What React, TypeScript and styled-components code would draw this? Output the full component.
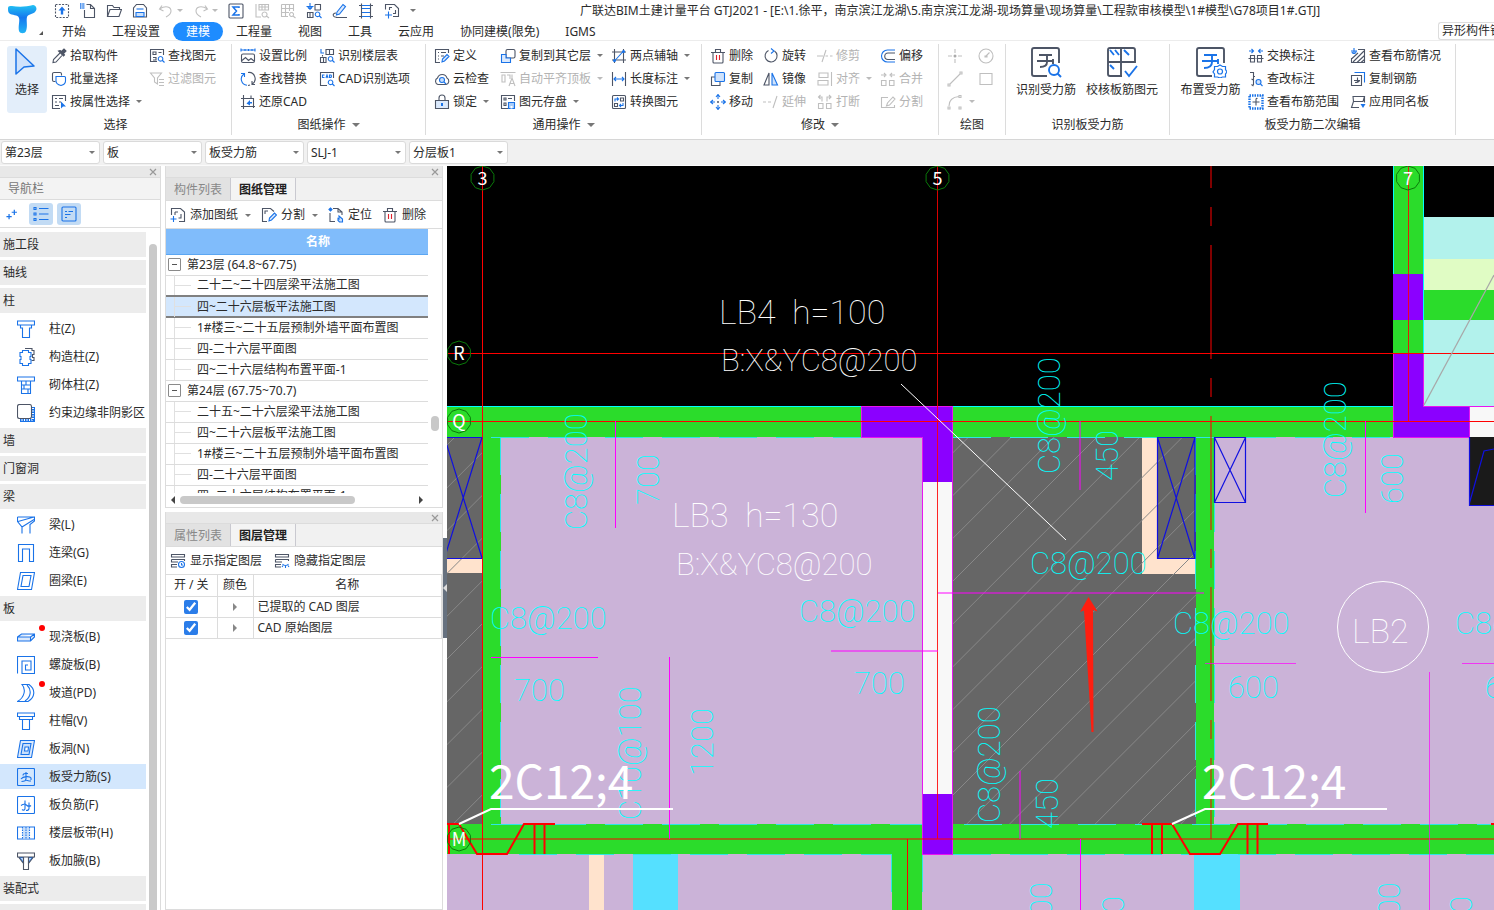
import React, { ReactNode } from "react";
import styled, { createGlobalStyle, css } from "styled-components";

const INK = "#4d5566";
const BLUE = "#1a73e8";
const MUTE = "#bfbfbf";
const LINE = "#dcdcdc";

const GlobalStyle = createGlobalStyle`
  * { box-sizing: border-box; }
  body {
    margin: 0;
    background: #fff;
    color: #2b2b2b;
    font: 12px/16px "Noto Sans", "Noto Sans CJK SC", sans-serif;
  }
  button, select, input { font: inherit; color: inherit; }
  button { border: 0; background: none; padding: 0; }
`;

/* ---------- icons ---------- */

const K = ({ d, f }: { d: string; f?: string }) => <path d={d} stroke={INK} fill={f || "none"} />;
const B = ({ d, f }: { d: string; f?: string }) => <path d={d} stroke={BLUE} fill={f || "none"} />;
const M = ({ d, f }: { d: string; f?: string }) => <path d={d} stroke={MUTE} fill={f || "none"} />;

const art: Record<string, ReactNode> = {
  upload: <><path d="M1.5 1.5h13v13h-13z" stroke={INK} strokeDasharray="2 1.3" /><path d="M8 3.500l3.500 4h-2.300v4h-2.400v-4H4.500z" fill={BLUE} /></>,
  newFile: <><K d="M6.500 1.500H10.500L14.500 5.500V14.500H4.500V7M10.500 1.500V5.500H14.500" /><path d="M0 1h5M0 3h5M0 5h5" stroke={BLUE} strokeDasharray="1.500 .8" strokeWidth="1.400" /></>,
  open: <K d="M1.500 13.500v-11h5l1.500 2h5.500v2M1.500 13.500l2.500-7h11.500l-2.500 7z" />,
  save: <><K d="M1.500 14V5l3-3.500h7l3 3.500v9z" /><B d="M4 13.500v-4h8v4z" f="#c9dffa" /><B d="M4.500 6h7" /></>,
  undo: <M d="M4 2.500L1.500 6 5.500 8M1.500 6C8 2 13 4 13 8c0 3-2 4.500-5 6" />,
  redo: <M d="M12 2.500L14.500 6l-4 2M14.500 6C8 2 3 4 3 8c0 3 2 4.500 5 6" />,
  sum: <><rect x="1" y="1" width="14" height="14" rx="1" stroke={INK} /><path d="M11 5V4H5l3.500 4L5 12h6v-1" stroke={BLUE} strokeWidth="1.500" /></>,
  ghostA: <M d="M2 1v13h5M5 1.500h9.500V7H5zM5 4h9M8 1v6M11 1v6M10.500 9a2.500 2.500 0 1 0 .1 0M12.500 13l2.500 2" />,
  ghostB: <M d="M1.500 1.500h12V8M1.500 1.500v12H8M1.500 5.500h12M1.500 9.500H9M5.500 1.500v12M9.500 1.500V8M11.500 9.500a2 2 0 1 0 .1 0M13 13l2.500 2" />,
  findAxis: <><B d="M4 0v7M.5 3.500h7M6 3.500a2 2 0 1 1-4 0M11.500 9a2.300 2.300 0 1 0 .1 0M13.500 13l2 2" /><K d="M9 1.500h5.500V7M9 1.500V7h5.500M1.500 9.500H7v5H1.500zM4 9v5" /></>,
  pen: <><B d="M5 9l6-7.500 2.500 2-6 7.500-3 1z" f="#dbe9fc" /><K d="M4 14.500h11M4 10C2 10 .5 11.500 1.500 13s3 1 4 1.500" /></>,
  ladder: <><B d="M4 2.500h8M4 5.500h8M4 9.500h8M4 13.500h8" /><K d="M3.500 .5v15M12.500 .5v15M1 2.500h2M13 2.500h2M1 13.500h2M13 13.500h2" /></>,
  paste: <><K d="M1.500 6.500V1.500H10.500L14.500 5.500V13.500H9M5.500 7V4.500H8M11.500 7v3.500H9" /><B d="M4.500 8.500v7M1 12h7" /></>,
  dropper: <><path d="M9 2.500l1.500 1L13 1l2 2-2.500 2.500 1 1.500-1 1-5-5z" fill={INK} stroke={INK} /><K d="M9 5L2.500 11.500 2 14.500l3-.5L11 7.500" /></>,
  batch: <><K d="M4.500 10.500H3A1.500 1.500 0 0 1 1.500 9V3A1.500 1.500 0 0 1 3 1.500h6A1.500 1.500 0 0 1 10.500 3v1.500" /><B d="M5 5.500h8.500a1 1 0 0 1 1 1V10c0 3-2.500 4-4.500 4.500C8 14 5 13 5 10z" /></>,
  byProp: <><K d="M9 14.500H1.500v-13h13V7M4 4.500h2M8 4.500h4M4 8h2M8 8h2M4 11.500h4" /><path d="M10 7.500v7l2-2h3z" fill={BLUE} /></>,
  findEl: <><K d="M8 13.500H1.500v-12h13V7M4 4h3v2.500H4zM9.500 4.500h3M4 9.500h3V12H4" /><B d="M11.500 8.500a2.300 2.300 0 1 0 .1 0M13.500 12.500l2 2" /></>,
  filter: <M d="M1.500 2h11L8.500 7v6l-3-2V7zM10 8.500h5M10 11.500h5M10 14.500h5" />,
  scale: <><B d="M1 2h14M1 .5v3M15 .5v3M5 1v2M8.500 1v2M12 1v2" /><rect x="1.500" y="6" width="13" height="8.500" rx="1.500" stroke={INK} /><K d="M2 12.500l3.500-3 3 3 2.500-2 3 2.500" /></>,
  replace: <><K d="M8 1.500a6.200 6.200 0 0 1 4 11.500M8 14.500a6 6 0 0 0 2-.5M12 10v3.500h3" /><B d="M7 14.300A6.200 6.200 0 0 1 4 3M1 2.500h3.500V6" /></>,
  restore: <><K d="M3.500 1v11.500H15M1 4.500h12.500V14M11 1.500v3M1 12.500h2.500V15" /><path d="M6.500 9.500l3.500-3.500v2h2v1.500h-2v2z" fill={BLUE} /></>,
  floorTbl: <><B d="M2 1v4h3M11.500 8.500a2.300 2.300 0 1 0 .1 0M13.500 12.500l2 2" /><K d="M7 1.500h7.500v5H7zM10.500 1.500v5M3.500 8.500V7M1.500 14.500v-5H7v5zM4.500 9.500v5" /></>,
  cadOpt: <><K d="M8 14.500H1.500v-13h13V7" /><B d="M5.500 4H3.500v2.500h2M7 7l1-3 1 3M10.500 4v2.500H12L12.500 5 12 4zM11.500 9a2.300 2.300 0 1 0 .1 0M13.500 13l2 2" /></>,
  define: <><K d="M6 14.500H1.500v-13h13V5M4 4.500h1M7 4.500h5M4 8h1M7 8h3M4 11h1" /><B d="M8 14l.5-3L13 6.500l2 2L10.500 13z" f="#dbe9fc" /></>,
  cloud: <><K d="M4 13.500a3.500 3.500 0 0 1-.5-6.500 5 5 0 0 1 9.500 0 3.500 3.500 0 0 1-1 6.500z" /><circle cx="8" cy="9" r="2.500" stroke={BLUE} fill="#c9dffa" /><B d="M10 11l2 2" /></>,
  lock: <><path d="M1.500 6.500h13v8h-13z" stroke={INK} fill="#dbe9fc" /><K d="M5 6V4a3 3 0 0 1 6 0v2" /><path d="M7 9h2v3H7z" fill={BLUE} /></>,
  copyFloor: <><rect x="6" y="1.500" width="9" height="8.500" rx="1.500" stroke={INK} /><B d="M6 6.500H1.500v8h9V10H6z" f="#dbe9fc" /></>,
  alignTop: <M d="M.5 1.500h15M2 4h3v7H2zM7 4h3v4M12 3.500v3M9 15l3-8 3 8M10 12.500h4" />,
  saveEl: <><K d="M8 14.500H1.500v-13h13V7M4 4h2v2H4zM8 4.500h4M4 9h2v2.500H4z" /><B d="M8.500 8.500h6v6h-6z" f="#a9ccf8" /><path d="M10.500 12h2v2.500h-2z" fill="#fff" /></>,
  axis2: <><K d="M3.500 1v14M12.500 1v14M1 4h14M1 12h14" /><B d="M3 13.500L13 2.500" /><circle cx="3.500" cy="12.500" r="1.500" fill={BLUE} /><circle cx="12.500" cy="3.500" r="1.500" fill={BLUE} /></>,
  lenDim: <><K d="M1.500 1v14M14.500 1v14" /><B d="M3 8h10M5 6L3 8l2 2M11 6l2 2-2 2" /></>,
  convert: <><rect x="1.500" y="1.500" width="13" height="13" rx="1" stroke={INK} /><K d="M9.500 4h3v3h-3zM3.500 9.500h3v3h-3z" /><B d="M4 7.500V5h3M6 3.500L7.500 5 6 6.500M12 9v2.500H9M10 10l-1.500 1.500L10 13" /></>,
  trash: <><K d="M1 4.500h14M3 4.500v9.500a1 1 0 0 0 1 1h8a1 1 0 0 0 1-1V4.500M5.500 4V1.500h5V4" /><path d="M6.500 7v5M9.500 7v5" stroke="#e0232e" /></>,
  copy: <><K d="M5 6H1.500v8.500H10V11" /><rect x="5" y="1.500" width="9.500" height="9" rx="1" stroke={BLUE} fill="#cfe2fb" /></>,
  move: <><B d="M8 1v4M8 11v4M1 8h4M11 8h4M6 3l2-2.500L10 3M6 13l2 2.500 2-2.500M3 6L.5 8 3 10M13 6l2.500 2-2.500 2" /><circle cx="8" cy="8" r="1" fill={INK} /></>,
  rotate: <><K d="M5.500 2.500a6 6 0 1 0 6 .5" /><B d="M8 .5L11 3 8 5.500" /></>,
  mirror: <><K d="M6 2L1 14h5z" /><B d="M9 2l5.500 12H9z" f="#cfe2fb" /></>,
  extend: <M d="M0 8h3M5 8h3M14 2l-4 12" />,
  trim: <M d="M0 8h6M8.500 8H11M13 8h2.500M9 2L5 14" />,
  align: <M d="M2 2h9v4.500H2zM1 9.500h10V14H1zM14.500 1v14" />,
  brk: <M d="M1.500 9.500h4.500v5H1.500zM9.500 9.500H14v5H9.500zM5 7.500V3H2M3.500 1L1.500 3l2 2M10 7.500V3h3.500M12 1l2 2-2 2" />,
  offset: <><K d="M15 5H8a3 3 0 0 0 0 6.500h7" /><B d="M15 2H7.500a6 6 0 0 0 0 12H15" /></>,
  merge: <M d="M1.500 9.500h4.500v5H1.500zM9.500 9.500H14v5H9.500zM1 4h4M4 2l2 2-2 2M15 4h-4M12 2l-2 2 2 2" />,
  split: <M d="M8 3.500H1.500v10h13V11M6.500 12l1-3L13 3l2 2-5.500 6z" />,
  point: <><M d="M8 1v4M8 11v4M1 8h4M11 8h4" /><circle cx="8" cy="8" r="1.500" fill="#aaa" /></>,
  line: <M d="M3 13L13 3M1 13h2v2H1zM13 1h2v2h-2z" />,
  arc: <M d="M2 12C2 6 6 3 12 2.500M1 13h2v2H1zM12 1.500h2v2h-2zM12 13h2v2h-2z" />,
  circle: <><circle cx="8" cy="8" r="7" stroke={MUTE} /><M d="M8 8l3.500-3.500M7 8h2v1H7z" /></>,
  rect: <M d="M2 2.500h12v11H2z" />,
  swap: <><B d="M1 3h4M3.500 1l2 2-2 2M15 3h-4M12.500 1l-2 2 2 2" /><K d="M2.500 7.500h4v6.500h-4zM9.500 7.500h4v6.500h-4zM.5 10.500h7M8.500 10.500h7" /></>,
  edit: <><K d="M2 1.500h3.500v4h1.500M5.500 5.500V9L3.500 8M5.500 9v5M3.500 13.500l2 1.500" /><circle cx="10.500" cy="11" r="2.500" stroke={BLUE} fill="#cfe2fb" /><B d="M12.500 13l2 2" /></>,
  range: <><path d="M1.500 1.500h13v13h-13z" stroke={BLUE} strokeWidth="2.400" strokeDasharray="1.500 1" /><K d="M9.500 4.500C8 4 8 5 8 6v5.500M4.500 8h7" /></>,
  status: <><K d="M8 1.500h6.500v13h-13V10M3 14l11-11M7 14.500l7.500-7M2 10.500L8 5M11 14.500l3.500-3" /><B d="M4 0v6M1 3h6M6 3a2 2 0 1 1-4 1" /></>,
  copyBar: <><K d="M1.500 4.500h10v10h-10zM4 9.500h6M7.500 6.500v5.500M5 11.500c2 0 4-.5 4.500-2" /><B d="M4.500 1.500h10v10" /></>,
  apply: <><K d="M3 2.500h11.500l-1.500 5H3.500zM9 13.500H1.500l2-6M14.500 2.500v6" /><path d="M10.500 10h5L13 14z" fill={BLUE} /></>,
  addDwg: <><K d="M1.500 8V1.500h9L14.500 5v9.500H9M5 5v3M5 5h3M11 7v4H8.500" /><B d="M3.500 9v6M.5 12h6" /></>,
  cutDwg: <><K d="M6 14.500H1.500v-13h8L13 4.500M4 7V4h3" /><B d="M8 14l.5-3L13.500 6l2 2-5 5z" f="#dbe9fc" /></>,
  locate: <><K d="M5 1.500h5l4 3.500v3M2 6v8.500h5M10 1.500V5h4" /><B d="M1 2.500l1.500-1.500L4 2.500 2.500 4z" f={BLUE} /><B d="M11 9v3l-1-.5v2l1.500 1.500h3V12z" f="#cfe2fb" /></>,
  layerOn: <><K d="M1.500 1.500h13v2.500h-13zM1.500 6.500h13V8M1.500 6.500V9H8M7 11.500H1.500V14H7" /><circle cx="11.500" cy="11.500" r="3" stroke={BLUE} fill="#fff" /><B d="M11.500 10v2h1.500" /></>,
  layerOff: <><K d="M1.500 1.500h13v2.500h-13zM1.500 6.500h13V8M1.500 6.500V9H8M7 11.500H1.500V14H7" /><B d="M8.500 11c1.500 2 4.500 2 6 0M9 12.500l-1 1.500M11.500 13v2M14 12.500l1 1.500" /></>,
  plus2: <path d="M3.500 8v6M.5 11h6M9.500 3v6M6.500 6h6" stroke={BLUE} strokeWidth="1.400" />,
  list: <><B d="M6 2.500h9.500M6 8h9.500M6 13.500h9.500" /><B d="M1 1.500h2v2H1zM1 7h2v2H1zM1 12.500h2v2H1z" /></>,
  card: <><rect x="1" y="1" width="14" height="14" rx="1" stroke={BLUE} /><B d="M4 5.500h2M7.500 5.500H12M4 8.500h5.500M4 11.500h2" /></>,
};

const big: Record<string, ReactNode> = {
  cursor: <path d="M5 3l18 17-10 1-8 7z" stroke={BLUE} strokeWidth="1.500" fill="#cfe2fb" strokeLinejoin="round" />,
  findBar: <><K d="M17 30H4a2 2 0 0 1-2-2V4a2 2 0 0 1 2-2h23a2 2 0 0 1 2 2v13" /><K d="M9 9h13M7 15h16V13M10 21c5 0 7-2 7-5V8M23 14v4" /><circle cx="24" cy="24" r="5" stroke={BLUE} fill="#fff" /><B d="M27.500 27.500L31 31" /></>,
  checkBar: <><K d="M16 30H4a2 2 0 0 1-2-2V4a2 2 0 0 1 2-2h23a2 2 0 0 1 2 2v13M15 2v28M2 16h27" /><B d="M4 4l4 5M9 4l4 5M18 4l5 5M4 19l4 4M19 25l4 5 8-10" /></>,
  setBar: <><K d="M17 30H4a2 2 0 0 1-2-2V4a2 2 0 0 1 2-2h23a2 2 0 0 1 2 2v13" /><B d="M9 9h13M7 15h16V13M9 22c6 0 8-2 8-6V8M23 14v4" /><path d="M25 19l2.500 1.500h3v3L32 26l-1.500 2v3h-3L25 32l-2.500-1h-3v-3L18 26l1.500-2.500v-3h3z" stroke={BLUE} strokeWidth="1.200" fill="#fff" /><circle cx="25" cy="25.500" r="2.500" stroke={BLUE} strokeWidth="1.200" /></>,
};

const navArt: Record<string, ReactNode> = {
  column: <B d="M.5 1h17v4H.5zM3.500 5v3H5.500V17.500h7V8h2V5" />,
  build: <><K d="M8 .5h7v2h2v4h-1.500v3H17v3h-2.500" /><B d="M5.500 2.500h6v2h2.500v4h-1v3h1v4h-2.500v2h-6v-2H3v-4h1v-3H3v-4h2.500z" f="#fff" /></>,
  brick: <B d="M.5 1h17v4H.5zM4.500 5V17.500h9V5M4.500 9h9M4.500 13h9M9 5V9M7 9v4M11 13v4" />,
  shade: <><B d="M3 17.500h14.500V3" /><path d="M3 16h13V3" stroke={BLUE} strokeWidth="2" strokeDasharray="1.500 1" /><rect x=".5" y=".5" width="14" height="14" rx="2" stroke={INK} fill="#fff" /></>,
  beam: <B d="M.5 1h17v4L13 8.500V17.500M5 17.500V11L.5 5.500V1M1 5.500L17 1M5 11L17 3.500" />,
  link: <B d="M1.500 17.500V.5h15v17h-4V5h-7v12.500z" />,
  ring: <B d="M3.500 .5h14l-3 17H.5zM6 3.500h8l-2 11H4z" />,
  slab: <B d="M.5 9l4-3h13v3l-4 4H.5zM.5 9h13l4-3M13.500 9v4" f="#dbe9fc" />,
  spiral: <B d="M.5 17.500V.5h17v17H5V5h9v9H8.500V9H11" />,
  ramp: <B d="M5 .5h7c7 5 6 13-1 17H.5C8 13 9 5 5 .5zM10 1c5 5 4 12-2 16" />,
  cap: <B d="M.5 1h17v3.500H.5zM2.500 4.500v3h13v-3M5.500 7.500V17.500h7V7.500" />,
  hole: <><B d="M3.500 .5h14l-3 17H.5z" f="#dbe9fc" /><B d="M6 3.500h8l-2 11H4z" f="#c9dffa" /><B d="M8 7h3.500l-.5 4H7.500z" f="#fff" /></>,
  bars: <><rect x=".5" y=".5" width="17" height="17" rx="1" stroke={BLUE} /><B d="M6 7.500c0-2 1-2 5-2M4 11c2-3 9-3 10-1v2M9 4v7c0 2-2 2.500-4.500 2.500M8 12c2 0 3 1 6 1" /></>,
  negbars: <><rect x=".5" y=".5" width="17" height="17" rx="1" stroke={BLUE} /><B d="M8 4.500v8c0 2-2 2-3 1M4 9.500c3-2 5-1 6 0s3 1 4 0M12 6.500v6c0 2-1 2-3 2" /></>,
  strip: <><B d="M.5 3h17v12H.5z" /><path d="M6 3.500h6v11H6z" fill="#c9dffa" /><path d="M5.500 3v12M9 3v12M12.500 3v12" stroke={BLUE} strokeDasharray="1.500 1" /></>,
  haunch: <><B d="M2.500 5.500l4 5V5.500zM15.500 5.500l-4 5V5.500z" f="#c9dffa" /><K d="M.5 1h17v4H.5zM1.500 5l5 6.500M16.500 5l-5 6.500M6.500 5v12.500h5V5" /></>,
};

const Icon = ({ name, size = 16 }: { name: string; size?: number }) => (
  <svg width={size} height={size} viewBox="0 0 16 16" fill="none" strokeWidth="1.1" aria-hidden="true">{art[name]}</svg>
);
const Caret = styled.i<{ $muted?: boolean; $wide?: boolean }>`
  border: ${(p) => (p.$wide ? 4 : 3)}px solid transparent;
  border-top-color: ${(p) => (p.$muted ? "#bbb" : "#777")};
  border-bottom: 0;
  flex: none;
`;

/* ---------- shell ---------- */

const Shell = styled.div`
  display: flex;
  flex-direction: column;
  height: 100vh;
  overflow: hidden;
  svg { flex: none; }
`;
const Header = styled.header`
  display: flex;
  height: 41px;
  border-bottom: 1px solid #ececec;
`;
const Brand = styled.button`
  width: 49px;
  display: flex;
  align-items: flex-end;
  padding: 0 0 5px 7px;
  gap: 1px;
`;
const Corner = styled.i`
  border: 2px solid transparent;
  border-right-color: #555;
  border-bottom-color: #555;
`;
const HeadMain = styled.div`
  flex: 1;
  min-width: 0;
`;
const TitleRow = styled.div`
  display: flex;
  align-items: center;
  height: 21px;
`;
const Quick = styled.div`
  display: flex;
  align-items: center;
  gap: 10px;
  width: 531px;
  padding-left: 5px;
`;
const QuickBtn = styled.button`
  display: flex;
  align-items: center;
  gap: 3px;
`;
const Title = styled.h1`
  margin: 0;
  font-size: 12px;
  font-weight: 400;
  white-space: nowrap;
`;
const TabRow = styled.nav`
  display: flex;
  align-items: flex-end;
  height: 20px;
`;
const Tab = styled.button<{ $on?: boolean }>`
  height: 19px;
  padding: 1px 13px 0;
  border-radius: 10px;
  white-space: nowrap;
  ${(p) => p.$on && css`background: #1e8cff; color: #fff;`}
`;
const Hint = styled.button`
  margin: 0 0 1px auto;
  width: 56px;
  height: 18px;
  padding-left: 3px;
  overflow: hidden;
  white-space: nowrap;
  text-align: left;
  border: 1px solid #ddd;
  border-right: 0;
  border-radius: 3px 0 0 3px;
`;

/* ---------- ribbon ---------- */

const Ribbon = styled.div`
  display: flex;
  height: 99px;
  border-bottom: 1px solid #d6d6d6;
  overflow: hidden;
`;
const Group = styled.section<{ $w: number; $pad: number }>`
  flex: none;
  display: flex;
  flex-direction: column;
  width: ${(p) => p.$w}px;
  margin: 3px 0 4px;
  border-right: 1px solid ${LINE};
  > div { padding-left: ${(p) => p.$pad}px; }
`;
const Cols = styled.div<{ $cols: string }>`
  display: grid;
  grid-template-columns: ${(p) => p.$cols};
  height: 72px;
`;
const Col = styled.div`
  display: flex;
  flex-direction: column;
`;
const Tool = styled.button<{ $off?: boolean }>`
  display: flex;
  align-items: center;
  gap: 3px;
  height: 23px;
  flex: none;
  white-space: nowrap;
  color: ${(p) => (p.$off ? "#b3b3b3" : "inherit")};
  i { margin-left: 3px; }
`;
const BigTool = styled.button<{ $on?: boolean }>`
  display: flex;
  flex-direction: column;
  align-items: center;
  gap: 4px;
  height: 67px;
  margin: 2px 4px 0 0;
  border-radius: 3px;
  white-space: nowrap;
  ${(p) => p.$on && css`background: #e3eefa;`}
`;
const GroupName = styled.h2`
  display: flex;
  align-items: center;
  justify-content: center;
  gap: 6px;
  height: 20px;
  margin: 0;
  font-size: 12px;
  font-weight: 400;
`;

type T = [string, string, ("off" | "menu" | "offmenu")?];
const Tools = ({ items }: { items: T[] }) => (
  <Col>
    {items.map(([icon, label, m]) => {
      const off = m === "off" || m === "offmenu";
      return (
        <Tool key={icon} $off={off} disabled={off} aria-label={label || icon}>
          <Icon name={icon} />
          {label}
          {(m === "menu" || m === "offmenu") && <Caret $muted={off} />}
        </Tool>
      );
    })}
  </Col>
);
const Big = ({ icon, label, on }: { icon: string; label: string; on?: boolean }) => (
  <BigTool $on={on}>
    <svg width="32" height="32" viewBox="0 0 32 32" fill="none" strokeWidth="1.9">{big[icon]}</svg>
    {label}
  </BigTool>
);

const ribbon: { name: string; w: number; pad: number; cols: string; menu?: boolean; body: ReactNode }[] = [
  {
    name: "选择", w: 232, pad: 7, cols: "44px 98px auto",
    body: <><Big icon="cursor" label="选择" on />
      <Tools items={[["dropper", "拾取构件"], ["batch", "批量选择"], ["byProp", "按属性选择", "menu"]]} />
      <Tools items={[["findEl", "查找图元"], ["filter", "过滤图元", "off"]]} /></>,
  },
  {
    name: "图纸操作", w: 194, pad: 8, cols: "79px auto", menu: true,
    body: <><Tools items={[["scale", "设置比例"], ["replace", "查找替换"], ["restore", "还原CAD"]]} />
      <Tools items={[["floorTbl", "识别楼层表"], ["cadOpt", "CAD识别选项"]]} /></>,
  },
  {
    name: "通用操作", w: 276, pad: 8, cols: "66px 111px auto", menu: true,
    body: <><Tools items={[["define", "定义"], ["cloud", "云检查"], ["lock", "锁定", "menu"]]} />
      <Tools items={[["copyFloor", "复制到其它层", "menu"], ["alignTop", "自动平齐顶板", "offmenu"], ["saveEl", "图元存盘", "menu"]]} />
      <Tools items={[["axis2", "两点辅轴", "menu"], ["lenDim", "长度标注", "menu"], ["convert", "转换图元"]]} /></>,
  },
  {
    name: "修改", w: 237, pad: 8, cols: "53px 54px 63px auto", menu: true,
    body: <><Tools items={[["trash", "删除"], ["copy", "复制"], ["move", "移动"]]} />
      <Tools items={[["rotate", "旋转"], ["mirror", "镜像"], ["extend", "延伸", "off"]]} />
      <Tools items={[["trim", "修剪", "off"], ["align", "对齐", "offmenu"], ["brk", "打断", "off"]]} />
      <Tools items={[["offset", "偏移"], ["merge", "合并", "off"], ["split", "分割", "off"]]} /></>,
  },
  {
    name: "绘图", w: 67, pad: 8, cols: "31px auto",
    body: <><Tools items={[["point", "", "off"], ["line", "", "off"], ["arc", "", "offmenu"]]} />
      <Tools items={[["circle", "", "off"], ["rect", "", "off"]]} /></>,
  },
  {
    name: "识别板受力筋", w: 164, pad: 7, cols: "70px 82px",
    body: <><Big icon="findBar" label="识别受力筋" /><Big icon="checkBar" label="校核板筋图元" /></>,
  },
  {
    name: "板受力筋二次编辑", w: 286, pad: 7, cols: "71px 102px auto",
    body: <><Big icon="setBar" label="布置受力筋" />
      <Tools items={[["swap", "交换标注"], ["edit", "查改标注"], ["range", "查看布筋范围"]]} />
      <Tools items={[["status", "查看布筋情况"], ["copyBar", "复制钢筋"], ["apply", "应用同名板"]]} /></>,
  },
];

const Filters = styled.div`
  display: flex;
  align-items: center;
  gap: 3px;
  height: 26px;
  padding-left: 1px;
  background: #f1f1f1;
  border-bottom: 1px solid #fafafa;
`;
const Pick = styled.label`
  display: flex;
  align-items: center;
  width: 99px;
  height: 23px;
  padding-right: 4px;
  background: #fff;
  border: 1px solid #dadada;
  border-radius: 3px;
  select {
    flex: 1;
    min-width: 0;
    appearance: none;
    border: 0;
    background: none;
    padding: 0 3px;
    outline: 0;
  }
`;

/* ---------- side panels ---------- */

const Body = styled.div`
  display: flex;
  flex: 1;
  min-height: 0;
`;
const Strip = styled.div`
  display: flex;
  align-items: center;
  justify-content: flex-end;
  height: 12px;
  flex: none;
  padding-right: 3px;
  background: #e8e8e8;
  border-bottom: 1px solid ${LINE};
`;
const CloseBtn = () => (
  <button aria-label="关闭">
    <svg width="8" height="8" viewBox="0 0 8 8" stroke="#999" strokeWidth="1.2" display="block"><path d="M1 1l6 6M7 1L1 7" /></svg>
  </button>
);
const Nav = styled.aside`
  display: flex;
  flex-direction: column;
  width: 161px;
  flex: none;
  border-right: 1px solid ${LINE};
`;
const NavTitle = styled.h2`
  height: 22px;
  flex: none;
  margin: 0;
  padding: 3px 8px;
  background: #f3f3f3;
  border-bottom: 1px solid ${LINE};
  color: #777;
  font-size: 12px;
  font-weight: 400;
`;
const NavTools = styled.div`
  display: flex;
  align-items: center;
  gap: 4px;
  height: 28px;
  flex: none;
  padding-left: 1px;
  border-bottom: 1px solid ${LINE};
`;
const ModeBtn = styled.button<{ $on?: boolean }>`
  display: grid;
  place-items: center;
  width: 24px;
  height: 22px;
  border-radius: 3px;
  background: ${(p) => (p.$on ? "#c2dbf4" : "none")};
`;
const NavBody = styled.div`
  display: flex;
  flex: 1;
  min-height: 0;
  overflow: hidden;
`;
const NavList = styled.div`
  display: flex;
  flex-direction: column;
  gap: 3px;
  width: 146px;
  padding-top: 4px;
`;
const NavHead = styled.button`
  flex: none;
  height: 25px;
  padding: 0 3px;
  text-align: left;
  background: #ececec;
`;
const NavItem = styled.button<{ $on?: boolean }>`
  position: relative;
  flex: none;
  display: flex;
  align-items: center;
  gap: 14px;
  height: 25px;
  padding-left: 17px;
  white-space: nowrap;
  background: ${(p) => (p.$on ? "#d3e7fd" : "none")};
`;
const Dot = styled.i`
  position: absolute;
  left: 39px;
  top: 1px;
  width: 6px;
  height: 6px;
  border-radius: 3px;
  background: #f00;
`;
const NavThumb = styled.div`
  width: 8px;
  margin: 16px 0 0 3px;
  border-radius: 4px 4px 0 0;
  background: #c9c9c9;
`;

const nav: [string, string?, ("dot" | "on")?][] = [
  ["施工段"], ["轴线"], ["柱"],
  ["柱(Z)", "column"], ["构造柱(Z)", "build"], ["砌体柱(Z)", "brick"], ["约束边缘非阴影区", "shade"],
  ["墙"], ["门窗洞"], ["梁"],
  ["梁(L)", "beam"], ["连梁(G)", "link"], ["圈梁(E)", "ring"],
  ["板"],
  ["现浇板(B)", "slab", "dot"], ["螺旋板(B)", "spiral"], ["坡道(PD)", "ramp", "dot"], ["柱帽(V)", "cap"],
  ["板洞(N)", "hole"], ["板受力筋(S)", "bars", "on"], ["板负筋(F)", "negbars"], ["楼层板带(H)", "strip"], ["板加腋(B)", "haunch"],
  ["装配式"], [""],
];

const Middle = styled.div`
  display: flex;
  flex-direction: column;
  gap: 4px;
  width: 278px;
  flex: none;
  margin-left: 4px;
`;
const Panel = styled.section<{ $h?: number }>`
  display: flex;
  flex-direction: column;
  ${(p) => (p.$h ? css`height: ${p.$h}px; flex: none;` : css`flex: 1;`)}
  border: 1px solid ${LINE};
  border-top: 0;
  min-height: 0;
`;
const PanelTabs = styled.div`
  display: flex;
  height: 23px;
  flex: none;
  background: #f1f1f1;
  border-bottom: 1px solid ${LINE};
`;
const PanelTab = styled.button<{ $on?: boolean }>`
  width: 65px;
  padding-top: 1px;
  border-right: 1px solid #c9c9d0;
  background: ${(p) => (p.$on ? "#f4f4f4" : "#e2e2e2")};
  color: ${(p) => (p.$on ? "#222" : "#888")};
  font-weight: ${(p) => (p.$on ? 700 : 400)};
`;
const PanelTools = styled.div<{ $gap: number }>`
  display: flex;
  align-items: center;
  gap: ${(p) => p.$gap}px;
  height: 28px;
  flex: none;
  padding: 1px 0 0 4px;
  border-bottom: 1px solid ${LINE};
`;
const PanelTool = styled(Tool)`
  gap: 4px;
`;
const TreeWrap = styled.div`
  display: flex;
  flex: 1;
  min-height: 0;
`;
const TreeView = styled.div`
  width: 262px;
  overflow: hidden;
`;
const Tree = styled.table`
  width: 100%;
  border-collapse: collapse;
  th {
    height: 25px;
    padding: 1px 0 0 42px;
    background: #80bcfb;
    border-bottom: 1px solid #5ba6f2;
    color: #fff;
  }
  td { padding: 0; }
`;
const TreeRow = styled.tr<{ $on?: boolean }>`
  height: 21px;
  td { border-bottom: 1px solid ${LINE}; }
  ${(p) => p.$on && css`
    background: #d3e7fd;
    td { border-top: 2px solid #808080; border-bottom: 2px solid #808080; }
  `}
`;
const TreeCell = styled.div`
  display: flex;
  align-items: center;
  height: 19px;
  white-space: nowrap;
`;
const Fold = styled.button`
  width: 13px;
  height: 13px;
  margin: 0 6px 0 2px;
  border: 1px solid #8a8a8a;
  border-radius: 1px;
  background: linear-gradient(#555, #555) center / 5px 1px no-repeat;
`;
const Branch = styled.i`
  width: 17px;
  height: 20px;
  margin: 0 6px 0 8px;
  border-left: 1px solid #e0e0e0;
  background: linear-gradient(#e0e0e0, #e0e0e0) center / 100% 1px no-repeat;
`;
const VThumb = styled.div`
  width: 8px;
  height: 15px;
  margin: 187px 0 0 3px;
  border-radius: 4px;
  background: #c8c8c8;
`;
const HScroll = styled.div`
  display: flex;
  align-items: center;
  gap: 5px;
  height: 14px;
  flex: none;
  padding-left: 5px;
`;
const HThumb = styled.div`
  width: 175px;
  height: 8px;
  margin-right: 59px;
  border-radius: 4px;
  background: #c9c9c9;
`;
const Side = styled.i<{ $right?: boolean; $tone?: string }>`
  display: inline-block;
  border: 4px solid transparent;
  ${(p) => (p.$right ? "border-right: 0; border-left-color" : "border-left: 0; border-right-color")}: ${(p) => p.$tone || "#444"};
`;
const Layers = styled.table`
  border-collapse: collapse;
  width: 100%;
  table-layout: fixed;
  th, td {
    height: 21px;
    padding: 0;
    border: 1px solid ${LINE};
    text-align: center;
    font-weight: 400;
    line-height: 16px;
  }
  th:first-child, td:first-child { border-left: 0; width: 51px; }
  th:nth-child(2) { width: 36px; }
  tr:first-child th { border-top: 0; }
  td:last-child { text-align: left; padding-left: 4px; }
  input { display: block; width: 14px; height: 14px; margin: 0 auto; accent-color: #2b7de9; }
`;
const Splitter = styled.div`
  display: flex;
  width: 4px;
  flex: none;
  padding-top: 372px;
  button {
    width: 4px;
    height: 100px;
    background: #66717f;
    display: grid;
    place-items: center;
  }
`;

const floors: [string, string[]][] = [
  ["第23层 (64.8~67.75)", ["二十二~二十四层梁平法施工图", "四~二十六层板平法施工图", "1#楼三~二十五层预制外墙平面布置图", "四-二十六层平面图", "四~二十六层结构布置平面-1"]],
  ["第24层 (67.75~70.7)", ["二十五~二十六层梁平法施工图", "四~二十六层板平法施工图", "1#楼三~二十五层预制外墙平面布置图", "四-二十六层平面图", "四~二十六层结构布置平面-1"]],
];

/* ---------- drawing ---------- */

const Stage = styled.main`
  flex: 1;
  min-width: 0;
  background: #000;
  overflow: hidden;
  svg { display: block; width: 100%; height: 100%; }
`;
const Note = styled.text<{ $white?: boolean; $large?: boolean }>`
  font-family: "Roboto", sans-serif;
  font-weight: 100;
  font-size: ${(p) => (p.$large ? 34 : 31)}px;
  fill: ${(p) => (p.$white ? "#fff" : "#00ffff")};
  white-space: pre;
`;
const Mark = styled.text`
  font: 18px "Noto Sans CJK SC", sans-serif;
  fill: #fff;
  text-anchor: middle;
`;
const Callout = styled.text`
  font: 46px "Noto Sans CJK SC", sans-serif;
  fill: #fff;
`;

const GREEN = "#2bdc2b", PURPLE = "#8b00ff", LILAC = "#cbb3d8", SLAB = "#666", PEACH = "#ffe3cd", SKY = "#55e0ff", AQUA = "#b2f2ec";

const blocks: [number, number, number, number, string][] = [
  [447, 437, 36, 387, SLAB], [447, 559, 36, 14, PEACH],
  [500, 437, 423, 387, LILAC], [953, 437, 243, 387, SLAB],
  [1142, 437, 53, 137, PEACH], [1157, 437, 38, 122, SLAB],
  [1214, 437, 1200, 387, LILAC], [447, 854, 2000, 600, LILAC],
  [447, 406, 946, 31, GREEN], [483, 437, 18, 387, GREEN], [1196, 437, 18, 387, GREEN],
  [589, 854, 15, 600, PEACH], [633, 854, 45, 600, SKY], [1194, 854, 46, 600, SKY],
  [447, 824, 2000, 30, GREEN], [892, 854, 30, 600, GREEN],
  [861, 406, 92, 31, PURPLE], [922, 437, 31, 45, PURPLE], [922, 482, 31, 312, "#f8f8f8"], [922, 794, 31, 60, PURPLE],
  [1393, 166, 30, 240, GREEN], [1393, 274, 30, 46, PURPLE], [1393, 353, 30, 84, PURPLE], [1423, 406, 46, 31, PURPLE],
  [1424, 217, 1000, 42, AQUA], [1424, 259, 1000, 31, "#e0fcc4"], [1424, 290, 1000, 30, GREEN], [1424, 320, 1000, 86, AQUA],
  [1469, 406, 1000, 31, "#f8f8f8"], [1469, 437, 1000, 68, "#1a1a1a"],
];
const bubbles: [number, number, string][] = [[482.5, 178, "3"], [937.5, 178, "5"], [1408, 178, "7"], [459, 353, "R"], [459, 421, "Q"], [459, 839, "M"]];
const flat: [number, number, string, boolean?, boolean?][] = [
  [719, 324, "LB4  h=100", true, true], [721, 371, "B:X&YC8@200", true],
  [672, 527, "LB3  h=130", true, true], [676, 575, "B:X&YC8@200", true],
  [1352, 643, "LB2", true, true],
  [490, 629, "C8@200"], [799, 622, "C8@200"], [1030, 574, "C8@200"], [1173, 634, "C8@200"], [1455, 634, "C8@200"],
  [514, 701, "700"], [854, 694, "700"], [1228, 698, "600"], [1485, 698, "600"],
];
const upright: [number, number, string][] = [
  [587, 530, "C8@200"], [659, 505, "700"], [1060, 474, "C8@200"], [1118, 481, "450"], [1346, 498, "C8@200"], [1403, 504, "600"],
  [641, 820, "C10@100"], [713, 776, "1200"], [1000, 823, "C8@200"], [1058, 829, "450"],
  [1052, 999, "C8@200"], [1124, 947, "450"], [1400, 999, "C8@200"], [1472, 947, "600"],
];
const octagon = (x: number, y: number) =>
  Array.from({ length: 10 }, (_, i) => {
    const a = (i * Math.PI) / 5 + Math.PI / 2;
    return `${(x + 12 * Math.cos(a)).toFixed(1)},${(y + 12 * Math.sin(a)).toFixed(1)}`;
  }).join(" ");
const hatch = Array.from({ length: 30 }, (_, i) => {
  const c = 892 + i * 42.8;
  return `M${c - 437} 437L${c - 824} 824`;
}).join("");

const Drawing = () => (
  <Stage>
    <svg role="img" aria-label="板受力筋平面图">
      <defs>
        <clipPath id="slabs"><path d="M447 437h36v387h-36zM953 437h243v387H953z" /></clipPath>
      </defs>
      <g transform="translate(-447 -166)" fill="none">
        <g shapeRendering="crispEdges">
          {blocks.map(([x, y, w, h, c], i) => <rect key={i} x={x} y={y} width={w} height={h} fill={c} />)}
        </g>
        <path d={hatch} stroke="#888" clipPath="url(#slabs)" />
        <g shapeRendering="crispEdges">
          <path d="M447 406.500H861M953 406.500H1393M1393.500 166V274M1423.500 166V353" stroke="#0ff" />
          <path d="M491 437.500H861M953 437.500H1393M491 824.500H922M964 824.500H2400" stroke="#2ee6e6" strokeDasharray="38 19" />
          <path d="M519 854.500H892M953 854.500H2400M500.500 437V824M1214.500 437V824M1195.500 437V824M891.500 854V1400M922.500 854V1400" stroke="#2ee6e6" strokeDasharray="38 19" />
          <path d="M482.500 437V824" stroke="#d8f5ee" strokeDasharray="38 19" />
          <path d="M861.500 406V437.500H922.500V854H952.500V406H861.500M1393.500 353H1423.500V406H1469V437H1393.500zM1469 406.500H2400" stroke="#e815f0" />
          <path d="M482.500 166V910M447 353.500H2400M447 421.500H2400M907.500 839V1400" stroke="#f00" />
          <path d="M937.500 166V839M1408.500 166V421" stroke="#f00" strokeOpacity=".85" />
          <path d="M447 839H2400" stroke="#f00" strokeOpacity=".5" strokeWidth="2" />
          <path d="M1211 166V188M1211 207V226M1211 245V359M1211 378V397M1211 416V530M1211 549V568M1211 587V701M1211 720V739M1211 758V839" stroke="#f00" strokeOpacity=".5" strokeWidth="2" />
          <path d="M615.500 421V528M491 657.500H598M669.500 657V839M1080.500 839V1400M1365.500 421V513" stroke="#f0f" />
          <path d="M831 651H938M938 593H1204M1080 421V490M1020 771V839" stroke="#f0f" strokeOpacity=".5" strokeWidth="2" />
          <path d="M1205 663.500H1296M1462 663.500H2400M1429 672V1400" stroke="#f0f" strokeOpacity=".7" />
        </g>
        <path d="M444.500 437.500H482M447 558.500H482M444.500 437.500L482 558M482 437.500L444.500 558M1157.500 437.500H1195V558.500H1157.500zL1195 558.500M1195 437.500L1157.500 558.500M1214.500 437.500H1245.500V502.500H1214.500zL1245.500 502.500M1245.500 437.500L1214.500 502.500M1469.500 437V505.500H1600M1469.500 503L1484 451L1494 449" stroke="#1010e0" strokeWidth="1.200" />
        <path d="M1424 405L1494 275" stroke="#a8a8a8" strokeWidth="1.300" />
        <path d="M447 824H459L477 854H507L524 824H555M449 824V854M534.500 824V854M544.500 824V854M1142 824H1172L1190 854H1220L1238 824H1268M1152 824V854M1162 824V854M1247.500 824V854M1257.500 824V854M1491 824H1520" stroke="#f00" strokeWidth="2" />
        <path d="M901 384L1066 540" stroke="#fff" />
        <circle cx="1383" cy="627" r="45.500" stroke="#fff" />
        {flat.map(([x, y, t, w, l], i) => <Note key={i} x={x} y={y} $white={w} $large={l}>{t}</Note>)}
        {upright.map(([x, y, t], i) => <Note key={i} transform={`translate(${x} ${y}) rotate(-90)`}>{t}</Note>)}
        {bubbles.map(([x, y, t]) => (
          <g key={t}>
            <polygon points={octagon(x, y)} stroke="#0a7a0a" />
            <Mark x={x} y={y + 7}>{t}</Mark>
          </g>
        ))}
        <path d="M459 824L491 809H673M1172 824L1205 809H1387" stroke="#fff" strokeWidth="2" />
        <Callout x="489" y="799">2C12;4</Callout>
        <Callout x="1202" y="799">2C12;4</Callout>
        <path d="M1088.500 597L1080 612L1084 610.500L1091.500 732H1093.500L1093 610L1097.500 611.500z" fill="#ff1e10" />
      </g>
    </svg>
  </Stage>
);

/* ---------- page ---------- */

const quick: [string, boolean?][] = [["upload"], ["newFile"], ["open"], ["save"], ["undo", true], ["redo", true], ["sum"], ["ghostA"], ["ghostB"], ["findAxis"], ["pen"], ["ladder"], ["paste"]];
const tabs = ["开始", "工程设置", "建模", "工程量", "视图", "工具", "云应用", "协同建模(限免)", "IGMS"];
const picks = ["第23层", "板", "板受力筋", "SLJ-1", "分层板1"];

export default function App() {
  return (
    <Shell>
      <GlobalStyle />
      <Header>
        <Brand aria-label="主菜单">
          <svg width="31" height="30" viewBox="0 0 31 30">
            <defs><linearGradient id="logo" x1="0" y1="0" x2="0" y2="1"><stop offset="0" stopColor="#22c3f3" /><stop offset=".45" stopColor="#1577ee" /><stop offset="1" stopColor="#22b5f5" /></linearGradient></defs>
            <path d="M1 3c0-2 2-2 4-2 6 1 14 1 21-1 3 0 5 4 2 7-2 2-7 2-8 5-1 4 1 9-1 14-1 3-6 3-7 0-1-5 1-10 0-13-1-4-7-2-10-5C1 7 1 5 1 3z" fill="url(#logo)" />
          </svg>
          <Corner />
        </Brand>
        <HeadMain>
          <TitleRow>
            <Quick>
              {quick.map(([n, m]) => <QuickBtn key={n} aria-label={n}><Icon name={n} />{m && <Caret $muted />}</QuickBtn>)}
              <QuickBtn aria-label="更多"><Caret /></QuickBtn>
            </Quick>
            <Title>广联达BIM土建计量平台 GTJ2021 - [E:\1.徐平，南京滨江龙湖\5.南京滨江龙湖-现场算量\现场算量\工程款审核模型\1#模型\G78项目1#.GTJ]</Title>
          </TitleRow>
          <TabRow>
            {tabs.map((t) => <Tab key={t} $on={t === "建模"}>{t}</Tab>)}
            <Hint>异形构件钢筋</Hint>
          </TabRow>
        </HeadMain>
      </Header>
      <Ribbon>
        {ribbon.map((g) => (
          <Group key={g.name} $w={g.w} $pad={g.pad}>
            <Cols $cols={g.cols}>{g.body}</Cols>
            <GroupName>{g.name}{g.menu && <Caret $wide />}</GroupName>
          </Group>
        ))}
      </Ribbon>
      <Filters>
        {picks.map((p) => <Pick key={p}><select aria-label={p}><option>{p}</option></select><Caret /></Pick>)}
      </Filters>
      <Body>
        <Nav>
          <Strip><CloseBtn /></Strip>
          <NavTitle>导航栏</NavTitle>
          <NavTools>
            <ModeBtn aria-label="展开"><Icon name="plus2" size={14} /></ModeBtn>
            <ModeBtn $on aria-label="列表"><Icon name="list" /></ModeBtn>
            <ModeBtn $on aria-label="卡片"><Icon name="card" /></ModeBtn>
          </NavTools>
          <NavBody>
            <NavList>
              {nav.map(([t, icon, m]) => icon ? (
                <NavItem key={t} $on={m === "on"}>
                  <svg width="18" height="18" viewBox="0 0 18 18" fill="none" strokeWidth="1.1">{navArt[icon]}</svg>
                  {t}
                  {m === "dot" && <Dot />}
                </NavItem>
              ) : <NavHead key={t}>{t}</NavHead>)}
            </NavList>
            <NavThumb />
          </NavBody>
        </Nav>
        <Middle>
          <Panel $h={342}>
            <Strip><CloseBtn /></Strip>
            <PanelTabs><PanelTab>构件列表</PanelTab><PanelTab $on>图纸管理</PanelTab></PanelTabs>
            <PanelTools $gap={10}>
              <PanelTool><Icon name="addDwg" />添加图纸<Caret /></PanelTool>
              <PanelTool><Icon name="cutDwg" />分割<Caret /></PanelTool>
              <PanelTool><Icon name="locate" />定位</PanelTool>
              <PanelTool><Icon name="trash" />删除</PanelTool>
            </PanelTools>
            <TreeWrap>
              <TreeView>
                <Tree>
                  <thead><tr><th>名称</th></tr></thead>
                  <tbody>
                    {floors.map(([f, kids], fi) => (
                      <React.Fragment key={f}>
                        <TreeRow><td><TreeCell><Fold aria-label="折叠" />{f}</TreeCell></td></TreeRow>
                        {kids.map((k, i) => <TreeRow key={k} $on={fi === 0 && i === 1}><td><TreeCell><Branch />{k}</TreeCell></td></TreeRow>)}
                      </React.Fragment>
                    ))}
                  </tbody>
                </Tree>
              </TreeView>
              <VThumb />
            </TreeWrap>
            <HScroll><Side /><HThumb /><Side $right /></HScroll>
          </Panel>
          <Panel>
            <Strip><CloseBtn /></Strip>
            <PanelTabs><PanelTab>属性列表</PanelTab><PanelTab $on>图层管理</PanelTab></PanelTabs>
            <PanelTools $gap={12}>
              <PanelTool><Icon name="layerOn" />显示指定图层</PanelTool>
              <PanelTool><Icon name="layerOff" />隐藏指定图层</PanelTool>
            </PanelTools>
            <Layers>
              <thead><tr><th>开 / 关</th><th>颜色</th><th>名称</th></tr></thead>
              <tbody>
                {["已提取的 CAD 图层", "CAD 原始图层"].map((t) => (
                  <tr key={t}>
                    <td><input type="checkbox" defaultChecked aria-label={t} /></td>
                    <td><Side $right $tone="#888" /></td>
                    <td>{t}</td>
                  </tr>
                ))}
              </tbody>
            </Layers>
          </Panel>
        </Middle>
        <Splitter><button aria-label="收起"><Side $tone="#ddd" /></button></Splitter>
        <Drawing />
      </Body>
    </Shell>
  );
}
